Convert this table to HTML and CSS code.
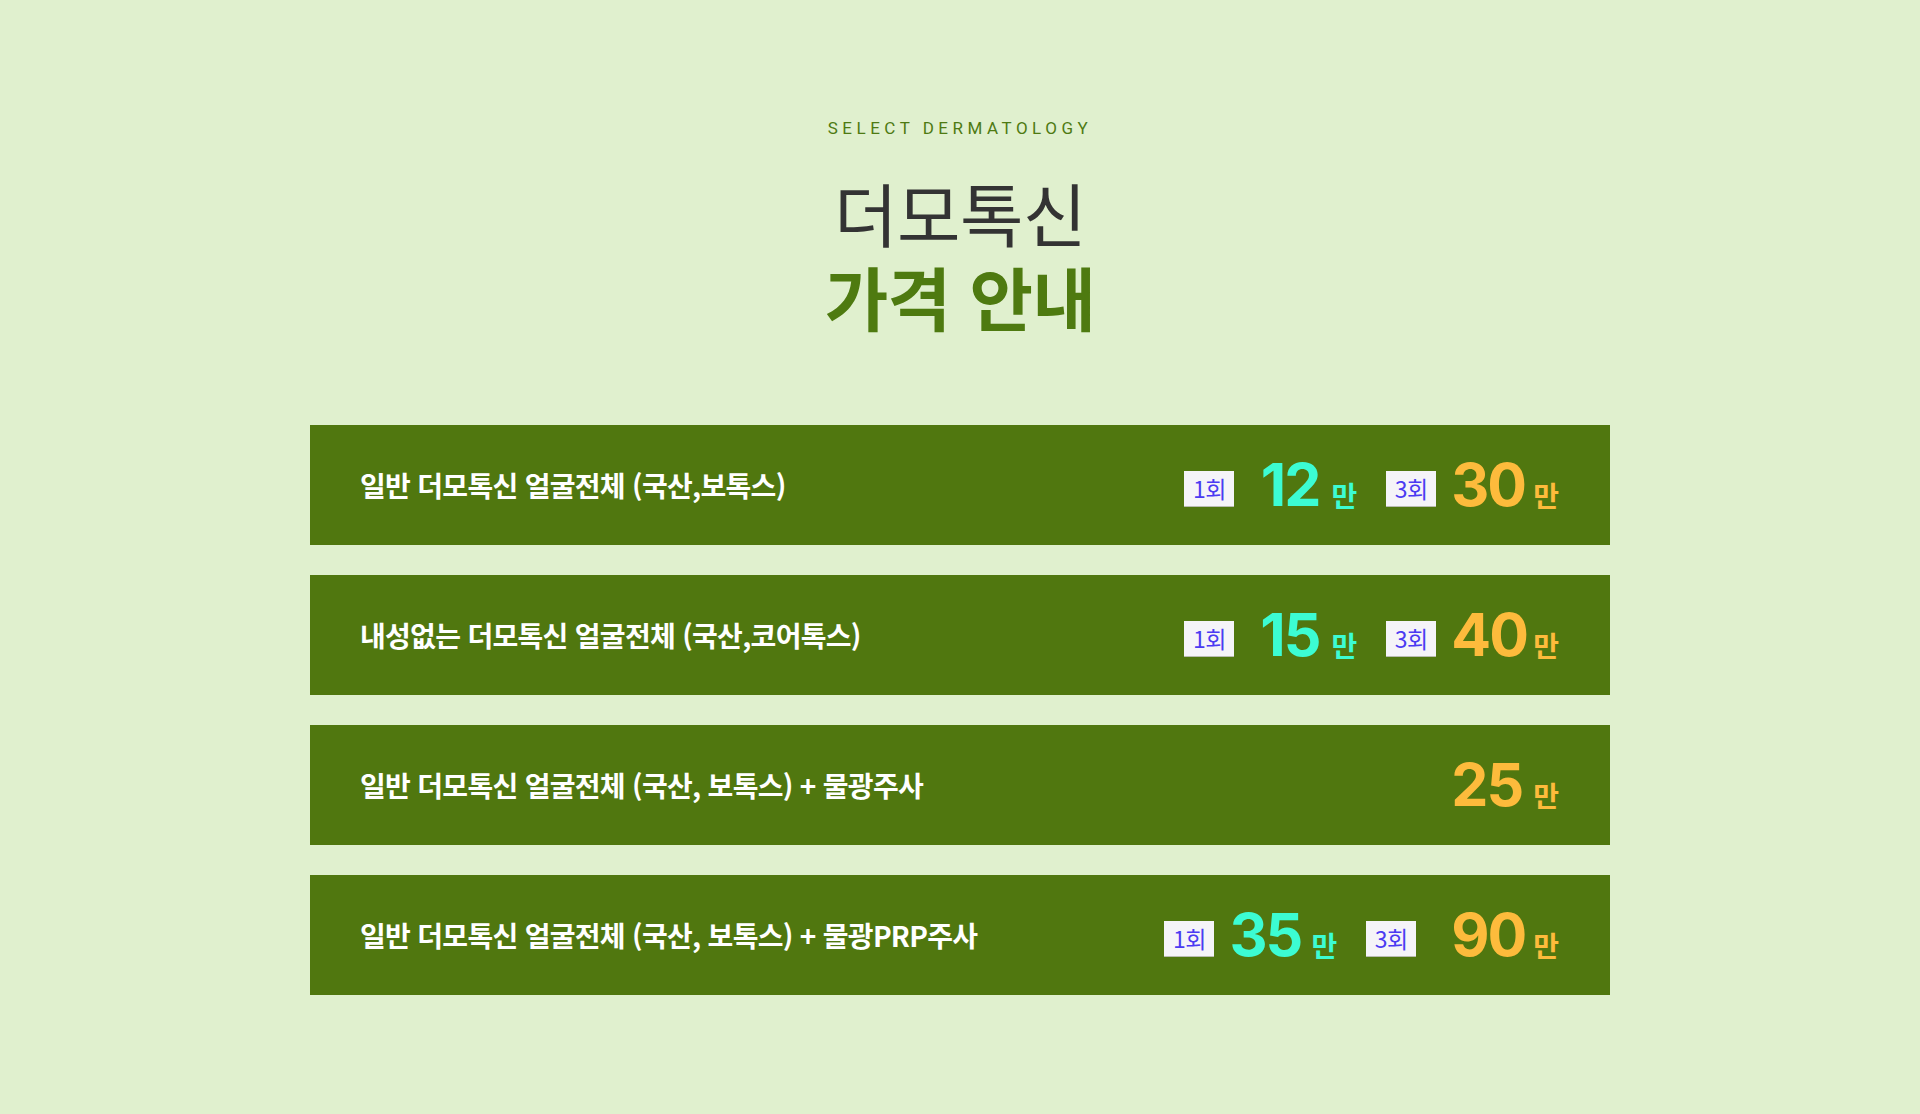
FILE: index.html
```html
<!DOCTYPE html>
<html lang="ko">
<head>
    <meta charset="UTF-8">
    <meta name="viewport" content="width=device-width, initial-scale=1.0">
    <title>더모톡신 가격 안내</title>
    <link rel="stylesheet" href="styles.css">
</head>
<body>
    <section class="price-section">
        <p class="eyebrow">SELECT DERMATOLOGY</p>
        <h2 class="title">
            <span class="title-top">더모톡신</span>
            <span class="title-bottom">가격 안내</span>
        </h2>

        <div class="price-list">
            <div class="price-row">
                <p class="item-name">일반 더모톡신 얼굴전체 (국산,보톡스)</p>
                <div class="prices">
                    <div class="price">
                        <span class="count">1회</span>
                        <span class="num mint">12</span>
                        <span class="unit mint">만</span>
                    </div>
                    <div class="price">
                        <span class="count">3회</span>
                        <span class="num gold">30</span>
                        <span class="unit gold">만</span>
                    </div>
                </div>
            </div>

            <div class="price-row">
                <p class="item-name">내성없는 더모톡신 얼굴전체 (국산,코어톡스)</p>
                <div class="prices">
                    <div class="price">
                        <span class="count">1회</span>
                        <span class="num mint">15</span>
                        <span class="unit mint">만</span>
                    </div>
                    <div class="price">
                        <span class="count">3회</span>
                        <span class="num gold">40</span>
                        <span class="unit gold">만</span>
                    </div>
                </div>
            </div>

            <div class="price-row">
                <p class="item-name">일반 더모톡신 얼굴전체 (국산, 보톡스) + 물광주사</p>
                <div class="prices">
                    <div class="price">
                        <span class="num gold">25</span>
                        <span class="unit gold">만</span>
                    </div>
                </div>
            </div>

            <div class="price-row">
                <p class="item-name">일반 더모톡신 얼굴전체 (국산, 보톡스) + 물광PRP주사</p>
                <div class="prices">
                    <div class="price">
                        <span class="count">1회</span>
                        <span class="num mint">35</span>
                        <span class="unit mint">만</span>
                    </div>
                    <div class="price">
                        <span class="count wide">3회</span>
                        <span class="num gold">90</span>
                        <span class="unit gold">만</span>
                    </div>
                </div>
            </div>
        </div>
    </section>
</body>
</html>
```

FILE: styles.css
```css
body {
    margin: 0;
    background: #e0f0ce;
    font-family: "Noto Sans CJK KR", "Noto Sans", sans-serif;
    color: #333;
}
.price-section {
    padding-top: 116px;
    padding-bottom: 120px;
    text-align: center;
}
.eyebrow {
    margin: 0;
    font-family: Roboto, "Noto Sans", sans-serif;
    font-size: 17px;
    line-height: 24px;
    letter-spacing: 4.5px;
    color: #4e7a12;
}
.title {
    margin: 30px 0 0;
    font-size: 69px;
    line-height: 84px;
    letter-spacing: -0.5px;
}
.title span {
    display: block;
}
.title-top {
    font-weight: 400;
    color: #333;
}
.title-bottom {
    font-weight: 700;
    color: #4e7a10;
}
.price-list {
    width: 1300px;
    margin: 87px auto 0;
    display: flex;
    flex-direction: column;
    gap: 30px;
}
.price-row {
    height: 120px;
    box-sizing: border-box;
    padding: 0 51px 0 50px;
    background: #50770f;
    display: flex;
    align-items: center;
    justify-content: space-between;
}
.item-name {
    margin: 0;
    font-size: 28px;
    font-weight: 700;
    letter-spacing: -0.7px;
    color: #fff;
}
.prices {
    display: flex;
    gap: 29px;
}
.price {
    display: flex;
    align-items: flex-end;
}
.count {
    width: 50px;
    height: 36px;
    margin-right: 15px;
    background: #f5f4f8;
    border-bottom: 1px solid #b9bcb0;
    box-sizing: border-box;
    display: flex;
    align-items: center;
    justify-content: center;
    font-size: 23px;
    letter-spacing: -0.5px;
    color: #4b3bf2;
}
.count.wide {
    margin-right: 35px;
}
.num {
    width: 70px;
    text-align: right;
    font-family: Inter, "Noto Sans", sans-serif;
    font-size: 59px;
    font-weight: 700;
    line-height: 0.73;
    letter-spacing: -2px;
}
.unit {
    margin-left: 12px;
    font-size: 28px;
    font-weight: 700;
    line-height: 0.8;
}
.mint {
    color: #3cfcd3;
}
.gold {
    color: #fdbb3c;
}
```
